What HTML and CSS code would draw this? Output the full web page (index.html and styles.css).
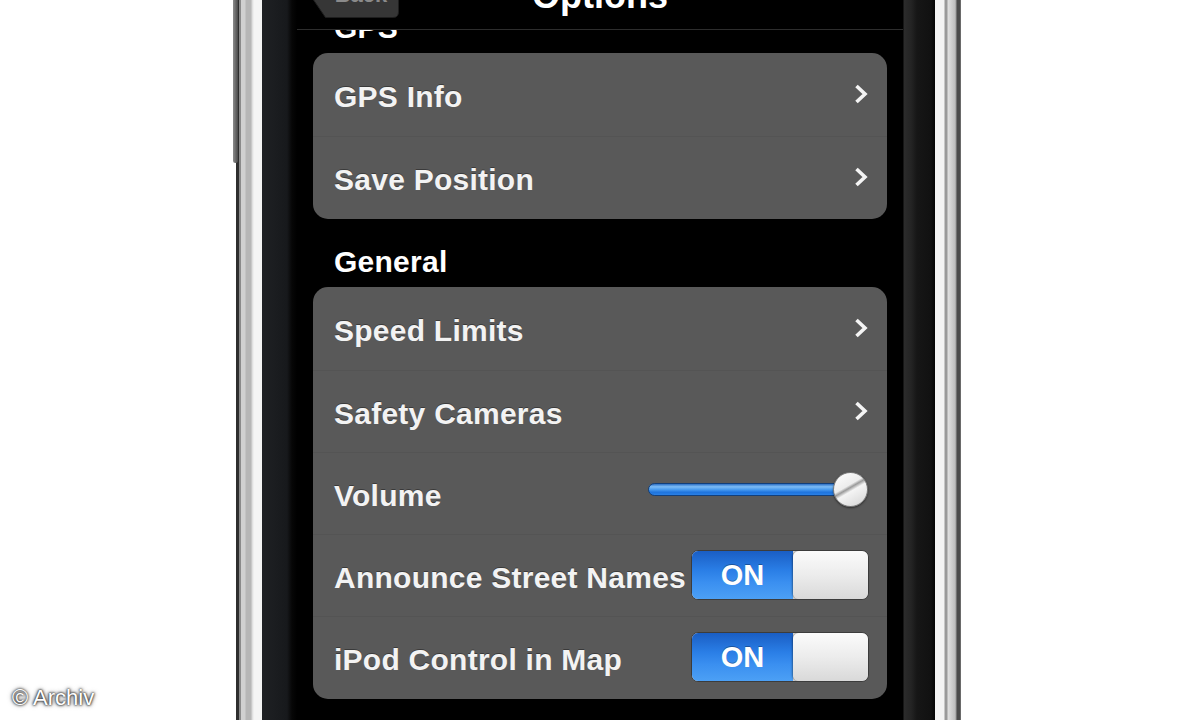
FILE: index.html
```html
<!DOCTYPE html>
<html lang="en">
<head>
<meta charset="UTF-8">
<title>Options</title>
<link rel="stylesheet" href="styles.css">
</head>
<body>
<div class="page">
	<div class="phone">
		<div class="sideBtn"></div>
		<div class="rim rimLeft"></div>
		<div class="bezel bezelLeft"></div>
		<section class="screen">
			<header class="nav">
				<a href="javascript:;" class="back">
					<svg width="90" height="48" viewBox="0 0 90 48">
						<path d="M0.5 24 L16.5 0.5 H84 Q89.5 0.5 89.5 6 V42 Q89.5 47.5 84 47.5 H16.5 Z" fill="#363636" stroke="#1e1e1e"/>
						<text x="52" y="32" text-anchor="middle" fill="#8a8a8a" font-family="Liberation Sans, Arial, sans-serif" font-weight="bold" font-size="22">Back</text>
					</svg>
				</a>
				<h1 class="title">Options</h1>
			</header>
			<div class="content">
				<h2 class="groupTitle">GPS</h2>
				<ul class="group">
					<li class="row">
						<span class="label">GPS Info</span>
						<svg class="chevron" width="14" height="22" viewBox="0 0 14 22"><path d="M2.5 3 L11 11 L2.5 19"/></svg>
					</li>
					<li class="row">
						<span class="label">Save Position</span>
						<svg class="chevron" width="14" height="22" viewBox="0 0 14 22"><path d="M2.5 3 L11 11 L2.5 19"/></svg>
					</li>
				</ul>
				<h2 class="groupTitle general">General</h2>
				<ul class="group">
					<li class="row">
						<span class="label">Speed Limits</span>
						<svg class="chevron" width="14" height="22" viewBox="0 0 14 22"><path d="M2.5 3 L11 11 L2.5 19"/></svg>
					</li>
					<li class="row">
						<span class="label">Safety Cameras</span>
						<svg class="chevron" width="14" height="22" viewBox="0 0 14 22"><path d="M2.5 3 L11 11 L2.5 19"/></svg>
					</li>
					<li class="row">
						<span class="label">Volume</span>
						<div class="slider">
							<div class="track"></div>
							<div class="knob"></div>
						</div>
					</li>
					<li class="row">
						<span class="label">Announce Street Names</span>
						<label class="switch"><span class="switchOn">ON</span><span class="switchKnob"></span></label>
					</li>
					<li class="row">
						<span class="label">iPod Control in Map</span>
						<label class="switch"><span class="switchOn">ON</span><span class="switchKnob"></span></label>
					</li>
				</ul>
			</div>
		</section>
		<div class="bezel bezelRight"></div>
		<div class="rim rimRight"></div>
	</div>
	<p class="credit">© Archiv</p>
</div>
</body>
</html>
```
FILE: styles.css
```css
html, body {
	margin: 0;
	background: #fff;
}
h1, h2, p {
	margin: 0;
}
ul {
	margin: 0;
	padding: 0;
	list-style: none;
}
a {
	text-decoration: none;
}
.page {
	position: relative;
	display: flex;
	height: 720px;
	padding-left: 236px;
	overflow: hidden;
	font-family: "Liberation Sans", Arial, sans-serif;
}

/* phone body */
.phone {
	position: relative;
	display: flex;
	height: 720px;
}
.sideBtn {
	position: absolute;
	left: -3px;
	top: 0;
	width: 5px;
	height: 163px;
	background: linear-gradient(to right, #8c8c8c, #4a4a4a);
	border-radius: 0 0 3px 3px;
}
.rim {
	flex: none;
}
.rimLeft {
	width: 26px;
	background: linear-gradient(to right, #2e2e2e 0 3px, #8a8a8a 3px 5px, #d0d0d0 5px 9px, #b6b6b6 10px 15px, #d8d8d8 16px, #f4f4f4 18px 26px);
}
.rimRight {
	width: 26px;
	background: linear-gradient(to right, #f4f4f4 0 9px, #9a9a9a 10px 12px, #e0e0e0 13px, #bdbdbd 20px, #9a9a9a 21px, #4a4a4a 22px 25px, #8a8a8a 26px);
}
.bezel {
	flex: none;
}
.bezelLeft {
	width: 35px;
	background: linear-gradient(to right, #1f2124 0, #17191c 25px, #060606 30px, #000 35px);
}
.bezelRight {
	width: 32px;
	background: linear-gradient(to right, #000 0, #2c2c2c 1px, #242424 8px, #161616 14px, #111 28px, #050505 32px);
}

/* screen */
.screen {
	display: flex;
	flex-direction: column;
	width: 606px;
	background: #000;
}
.nav {
	display: grid;
	grid-template-columns: 1fr auto 1fr;
	grid-template-rows: 29px;
	align-items: start;
	height: 29px;
	border-bottom: 1px solid #2d2d2d;
	overflow: hidden;
	flex: none;
}
.back {
	justify-self: start;
	display: block;
	height: 48px;
	margin: -30px 0 0 12px;
}
.back svg {
	display: block;
}
.title {
	margin-top: -22px;
	font: bold 36px/36px "Liberation Sans", Arial, sans-serif;
	color: #fff;
	text-shadow: 0 -1px 0 rgba(0,0,0,.6);
}
.content {
	flex: 1;
	padding: 0 16px;
	overflow: hidden;
}
.groupTitle {
	margin: -19px 0 8px 21px;
	font: bold 30px/34px "Liberation Sans", Arial, sans-serif;
	letter-spacing: .25px;
	color: #fff;
	text-shadow: 0 1px 1px rgba(0,0,0,.5);
}
.groupTitle.general {
	margin-top: 26px;
}
.group {
	padding: 1px 0;
	background: #595959;
	border-radius: 15px;
}
.row {
	display: flex;
	align-items: center;
	justify-content: space-between;
	box-sizing: border-box;
	height: 82px;
	padding: 4px 18px 0 21px;
}
.row + .row {
	border-top: 1px solid rgba(0,0,0,.05);
}
.label {
	font: bold 30px/34px "Liberation Sans", Arial, sans-serif;
	letter-spacing: .25px;
	color: #f3f3f3;
	white-space: nowrap;
	text-shadow: 0 -1px 0 rgba(0,0,0,.35);
}
.chevron {
	margin: 0 1px 6px 0;
	fill: none;
	stroke: #f4f4f4;
	stroke-width: 3.6;
	stroke-linejoin: miter;
}

/* volume slider */
.slider {
	display: flex;
	align-items: center;
	width: 220px;
	height: 36px;
	margin: 0 1px 12px 0;
}
.track {
	flex: 1;
	height: 11px;
	margin-right: -12px;
	border: 1px solid #123f7a;
	border-radius: 7px;
	background: linear-gradient(#2c6fc4 0, #7dbcf6 25%, #4a9cef 50%, #1f74dd 75%, #2a80e4 100%);
}
.knob {
	position: relative;
	width: 33px;
	height: 33px;
	border: 1px solid #7a7a7a;
	border-radius: 50%;
	background: linear-gradient(150deg, #ffffff 0%, #ececec 40%, #9a9a9a 46%, #f4f4f4 54%, #d2d2d2 100%);
	box-shadow: 0 1px 2px rgba(0,0,0,.5);
}

/* on/off switch */
.switch {
	display: flex;
	width: 178px;
	height: 50px;
	margin-bottom: 6px;
	box-sizing: border-box;
	border: 1px solid #3c3c3c;
	border-radius: 7px;
	overflow: hidden;
	background: #d8d8d8;
}
.switchOn {
	width: 101px;
	font: bold 29px/48px "Liberation Sans", Arial, sans-serif;
	color: #fff;
	text-align: center;
	background: linear-gradient(#1a5ec4 0%, #2a7ee6 40%, #3a8ff0 65%, #4ca0f5 100%);
	text-shadow: 0 -1px 0 rgba(0,0,0,.3);
}
.switchKnob {
	flex: 1;
	border-radius: 6px;
	background: linear-gradient(#fbfbfb, #ececec 50%, #d9d9d9);
	box-shadow: -1px 0 2px rgba(0,0,0,.35);
}

.credit {
	position: absolute;
	left: 12px;
	top: 687px;
	font: 22px/22px "Liberation Sans", Arial, sans-serif;
	color: #fff;
	text-shadow: 0 0 2px #222, 0 0 3px #333, 0 0 5px #666;
}
```
